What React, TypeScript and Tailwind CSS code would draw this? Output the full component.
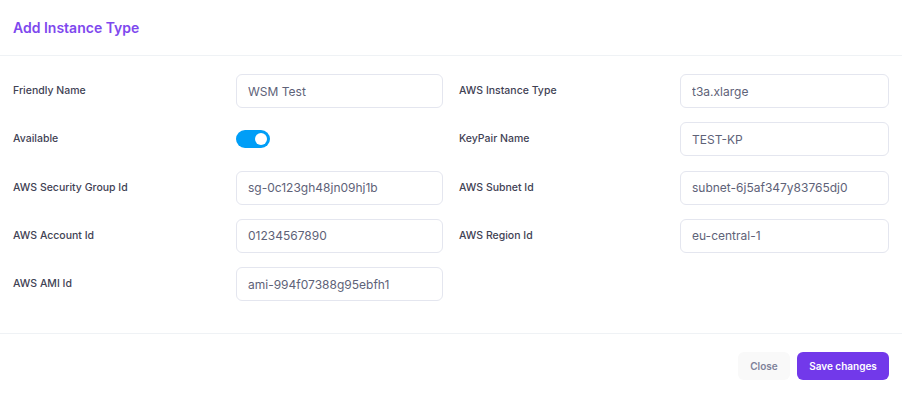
import React, { useState } from "react";

const left = [
  { label: "Friendly Name", value: "WSM Test" },
  { label: "Available", toggle: true },
  { label: "AWS Security Group Id", value: "sg-0c123gh48jn09hj1b" },
  { label: "AWS Account Id", value: "01234567890" },
  { label: "AWS AMI Id", value: "ami-994f07388g95ebfh1" },
];

const right = [
  { label: "AWS Instance Type", value: "t3a.xlarge" },
  { label: "KeyPair Name", value: "TEST-KP" },
  { label: "AWS Subnet Id", value: "subnet-6j5af347y83765dj0" },
  { label: "AWS Region Id", value: "eu-central-1" },
];

type Field = { label: string; value?: string; toggle?: boolean };

function Row({ field, labelW }: { field: Field; labelW: string }) {
  const [on, setOn] = useState(true);
  return (
    <div className="flex items-center h-[34px]">
      <label className={`${labelW} shrink-0 text-[10.5px] font-medium text-[#3f4254]`}>
        {field.label}
      </label>
      {field.toggle ? (
        <button
          onClick={() => setOn(!on)}
          className={`w-[34px] h-[18px] rounded-full flex items-center px-[3px] ${on ? "bg-[#009ef7] justify-end" : "bg-[#e4e6ef] justify-start"}`}
        >
          <span className="w-[12px] h-[12px] rounded-full bg-white" />
        </button>
      ) : (
        <input
          defaultValue={field.value}
          className="flex-1 min-w-0 h-[34px] px-[11px] rounded-md border border-[#e4e6ef] text-[12px] text-[#5e6278] outline-none"
        />
      )}
    </div>
  );
}

export default function App() {
  return (
    <div className="w-[902px] h-[394px] bg-white overflow-hidden" style={{ fontFamily: "Inter, sans-serif" }}>
      <div className="h-[56px] border-b border-[#eff2f5] flex items-center px-[13px]">
        <h2 className="text-[14px] font-semibold text-[#7e48ee]">Add Instance Type</h2>
      </div>
      <div className="grid grid-cols-2 gap-x-[16px] px-[13px] pt-[18px] pb-[32px] h-[278px] border-b border-[#eff2f5]">
        <div className="flex flex-col gap-[14.25px]">
          {left.map((f) => (
            <Row key={f.label} field={f} labelW="w-[223px]" />
          ))}
        </div>
        <div className="flex flex-col gap-[14.25px]">
          {right.map((f) => (
            <Row key={f.label} field={f} labelW="w-[221px]" />
          ))}
        </div>
      </div>
      <div className="flex justify-end gap-[7px] px-[13px] pt-[18px]">
        <button className="h-[28px] w-[52px] rounded-md bg-[#f9f9f9] text-[10px] font-semibold text-[#7e8299]">
          Close
        </button>
        <button className="h-[28px] w-[92px] rounded-md bg-[#7239ea] text-[10px] font-semibold text-white">
          Save changes
        </button>
      </div>
    </div>
  );
}
